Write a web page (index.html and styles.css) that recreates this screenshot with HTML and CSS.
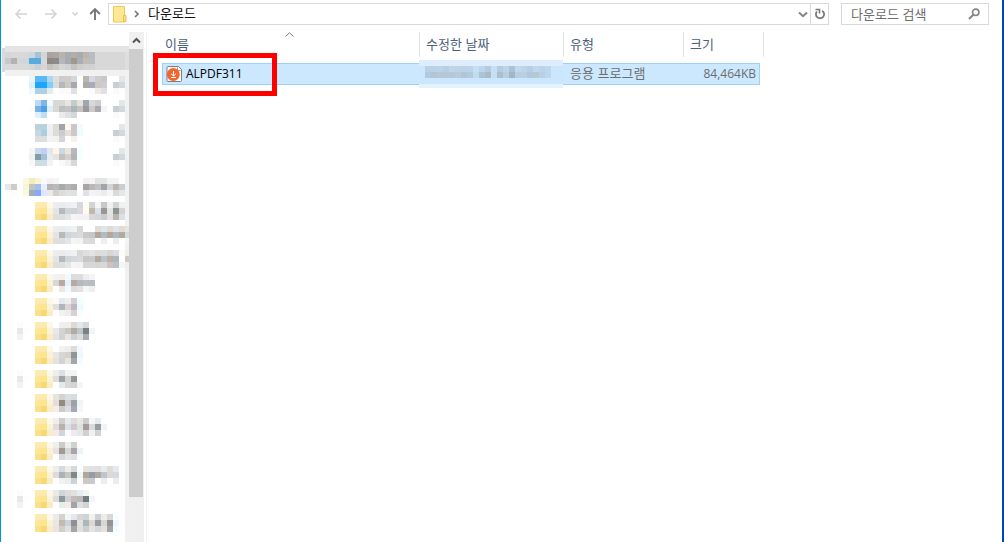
FILE: index.html
```html
<!DOCTYPE html>
<html lang="ko">
<head>
<meta charset="utf-8">
<title>다운로드</title>
<link rel="stylesheet" href="styles.css">
</head>
<body>
<div class="window">
  <header class="toolbar">
    <div class="history">
      <button class="icon-button" type="button" aria-label="뒤로" disabled>
        <svg width="14" height="12" viewBox="0 0 14 12"><path d="M13 6H2M6.500 1.500L2 6l4.500 4.500" fill="none" stroke="#d4d4d4" stroke-width="1.600"/></svg>
      </button>
      <button class="icon-button" type="button" aria-label="앞으로" disabled>
        <svg width="14" height="12" viewBox="0 0 14 12"><path d="M1 6h11M7.500 1.500L12 6l-4.500 4.500" fill="none" stroke="#d4d4d4" stroke-width="1.600"/></svg>
      </button>
      <button class="icon-button recent" type="button" aria-label="최근 위치" disabled>
        <svg width="8" height="6" viewBox="0 0 8 6"><path d="M1.500 1.500L4 4l2.500-2.500" fill="none" stroke="#cfcfcf" stroke-width="1.500"/></svg>
      </button>
      <button class="icon-button up" type="button" aria-label="위로">
        <svg width="12" height="14" viewBox="0 0 12 14"><path d="M6 13V2.500M1.200 7L6 2.200 10.800 7" fill="none" stroke="#777" stroke-width="1.900"/></svg>
      </button>
    </div>
    <div class="address">
      <svg class="folder" width="14" height="17" viewBox="0 0 14 17"><path d="M.5.5h11v15.500H.5z" fill="#ffe793" stroke="#ecc85a"/><path d="M10.500 9.500h2.500v6h-2.500z" fill="#fbe08a" stroke="#e6c04c"/></svg>
      <svg width="5" height="8" viewBox="0 0 5 8"><path d="M1 1l3 3-3 3" fill="none" stroke="#777" stroke-width="1.700"/></svg>
      <a class="crumb" href="#">다운로드</a>
      <button class="icon-button history-drop" type="button" aria-label="이전 위치">
        <svg width="10" height="7" viewBox="0 0 10 7"><path d="M1 1.500l4 3.700 4-3.700" fill="none" stroke="#858585" stroke-width="2"/></svg>
      </button>
      <button class="icon-button refresh" type="button" aria-label="새로 고침">
        <svg width="12" height="12" viewBox="0 0 12 12"><path d="M8.200 2.700a4.100 4.100 0 1 1-5.300.8" fill="none" stroke="#777" stroke-width="1.800"/><path d="M1.500 1.500h4v4" fill="none" stroke="#777" stroke-width="1.600"/></svg>
      </button>
    </div>
    <label class="search">
      <input type="text" placeholder="다운로드 검색" aria-label="다운로드 검색">
      <svg width="12" height="12" viewBox="0 0 12 12"><circle cx="7.700" cy="4.300" r="3.200" fill="none" stroke="#858585" stroke-width="1.600"/><path d="M5.300 6.700L1 11" stroke="#858585" stroke-width="2"/></svg>
    </label>
  </header>

  <div class="content">
    <nav class="tree" id="tree" aria-label="탐색 창"></nav>
    <div class="scrollbar">
      <button class="icon-button scroll-up" type="button" aria-label="위로 스크롤">
        <svg width="9" height="7" viewBox="0 0 9 7"><path d="M1 5.500l3.500-3.500L8 5.500" fill="none" stroke="#555" stroke-width="2"/></svg>
      </button>
      <div class="thumb"></div>
      <div class="track"></div>
    </div>
    <main class="files">
      <table class="list">
        <colgroup><col class="c-name"><col class="c-date"><col class="c-type"><col class="c-size"><col class="c-end"></colgroup>
        <thead>
          <tr>
            <th><button class="sort name-sort" type="button">이름<svg class="sort-mark" width="9" height="5" viewBox="0 0 9 5"><path d="M.5 4.500l4-3.700 4 3.700" fill="none" stroke="#777"/></svg></button></th>
            <th><button class="sort" type="button">수정한 날짜</button></th>
            <th><button class="sort" type="button">유형</button></th>
            <th colspan="2"><button class="sort" type="button">크기</button></th>
          </tr>
        </thead>
        <tbody>
          <tr>
            <td class="name">
              <div class="file">
                <svg width="16" height="16" viewBox="0 0 16 16"><path d="M2 .5h10.500l3 3v11q0 1-1 1H2q-1 0-1-1v-13q0-1 1-1z" fill="#fff" stroke="#857a78"/><path d="M11.500 1.500v3h3" fill="none" stroke="#b98a78"/><circle cx="7.300" cy="8.500" r="6.500" fill="#f2662b"/><path d="M7.500 5v5M5 7.700L7.500 10 10 7.700M5 11.500h5" fill="none" stroke="#fff"/></svg>
                <span>ALPDF311</span>
              </div>
              <div class="highlight"></div>
            </td>
            <td class="date"><svg class="date-mosaic" id="date" width="144" height="28" viewBox="0 0 144 28" role="img" aria-label="수정한 날짜"></svg></td>
            <td class="type">응용 프로그램</td>
            <td class="size">84,464KB</td>
            <td class="end"></td>
          </tr>
        </tbody>
      </table>
    </main>
  </div>
</div>
<script src="mosaic.js"></script>
</body>
</html>
```
FILE: styles.css
```css
* { box-sizing: border-box; }

body {
  margin: 0;
  background: #fff;
  font-family: "Noto Sans CJK KR", sans-serif;
  font-size: 13px;
  line-height: 18px;
}

button {
  margin: 0;
  padding: 0;
  border: 0;
  background: none;
  font: inherit;
  color: inherit;
}

svg { display: block; flex: none; }

.window {
  display: flex;
  flex-direction: column;
  min-height: 100vh;
  border-left: 1px solid #0096d6;
  border-right: 2px solid #0046ad;
}

.toolbar {
  display: flex;
  align-items: flex-start;
  height: 32px;
  padding: 3px 13px 0;
}

.history {
  display: flex;
  align-items: center;
  width: 94px;
  height: 22px;
  gap: 16px;
}

.icon-button {
  display: flex;
  align-items: center;
  justify-content: center;
  flex: none;
}

.recent { margin-left: -3px; }
.up { margin-left: -6px; }

.address {
  display: flex;
  flex: 1;
  align-items: center;
  height: 22px;
  padding-left: 4px;
  border: 1px solid #d9d9d9;
}

.folder { margin-right: 7px; }

.crumb {
  flex: 1;
  margin-left: 9px;
  padding-bottom: 2px;
  color: #111;
  text-decoration: none;
}

.history-drop { width: 14px; height: 20px; }

.refresh {
  width: 18px;
  height: 20px;
  border-left: 1px solid #d9d9d9;
}

.search {
  display: flex;
  align-items: center;
  width: 148px;
  height: 22px;
  margin-left: 12px;
  padding: 0 8px 0 9px;
  border: 1px solid #d9d9d9;
}

.search input {
  flex: 1;
  min-width: 0;
  height: 20px;
  padding: 0 0 2px;
  border: 0;
  outline: 0;
  background: none;
  font: inherit;
}

.search input::placeholder { color: #6d6d6d; opacity: 1; }

.content { display: flex; flex: 1; }

.tree {
  flex: none;
  width: 128px;
  padding-top: 14px;
  background: linear-gradient(#f1f1f1, #f1f1f1) right bottom / 4px calc(100% - 38px) no-repeat;
}

.node {
  display: block;
  height: 24px;
  padding-left: 4px;
}

.node.current {
  height: 30px;
  padding-left: 1px;
}

.node.group { margin-top: 6px; }

.scrollbar {
  display: flex;
  flex-direction: column;
  flex: none;
  width: 15px;
  background: #f0f0f0;
}

.scroll-up { height: 17px; }

.thumb {
  flex: 448;
  margin-right: 1px;
  background: #cdcdcd;
}

.track { flex: 45; }

.files {
  flex: 1;
  min-width: 0;
  margin-left: 2px;
  padding-left: 15px;
  border-left: 1px solid #f3f3f3;
}

.list {
  width: 602px;
  table-layout: fixed;
  border-collapse: separate;
  border-spacing: 0;
}

.c-name { width: 258px; }
.c-date { width: 144px; }
.c-type { width: 120px; }
.c-size { width: 76px; }
.c-end { width: 4px; }

.list th { padding: 0 0 6px; font-weight: 400; }

.sort {
  display: block;
  position: relative;
  width: 100%;
  height: 25px;
  padding: 0 6px 2px;
  border-right: 1px solid #e5e5e5;
  color: #4c607a;
  text-align: left;
}

.name-sort { padding-left: 3px; }

.sort-mark {
  position: absolute;
  top: 0;
  left: 123px;
}

.list td {
  position: relative;
  height: 22px;
  padding: 0 6px 2px;
  border: solid #99d1ff;
  border-width: 1px 0;
  background: #cce8ff;
  color: #6d6d6d;
  vertical-align: top;
}

.list .name { padding: 1px 0 0 3px; border-left-width: 1px; }

.file {
  display: flex;
  align-items: center;
  gap: 4px;
  color: #000;
}

.file, .list .size { font-family: "Open Sans", sans-serif; font-size: 12px; }

.list .size {
  padding: 1px 3px 0;
  border-right-width: 1px;
  text-align: right;
}

.list .end { padding: 0; border: 0; background: none; }

.highlight {
  position: absolute;
  top: -11px;
  left: -10px;
  width: 124px;
  height: 43px;
  border: 5px solid #f00;
}

.date-mosaic {
  position: absolute;
  top: -4px;
  left: -1px;
}
```
FILE: mosaic.js
```js
const NS = 'http://www.w3.org/2000/svg';
const CELL = 6;

function rect(svg, x, y, w, h, fill) {
  const r = document.createElementNS(NS, 'rect');
  const attrs = { x, y, width: w, height: h, fill };
  for (const key in attrs) r.setAttribute(key, attrs[key]);
  svg.append(r);
}

// Draws rows of space-separated hex colours; a dot leaves the cell empty.
function mosaic(svg, rows, x, y) {
  rows.forEach((row, j) => row.trim().split(/\s+/).forEach((c, i) => {
    if (c !== '.') rect(svg, x + i * CELL, y + j * CELL, CELL, CELL, '#' + c);
  }));
}

function node(kind, width, height) {
  const link = document.createElement('a');
  link.className = 'node ' + kind;
  link.href = '#';
  link.setAttribute('aria-label', '폴더');
  const svg = document.createElementNS(NS, 'svg');
  svg.setAttribute('width', width);
  svg.setAttribute('height', height);
  link.append(svg);
  document.getElementById('tree').append(link);
  return svg;
}

const current = node('current', 127, 30);
rect(current, 0, 2, 3, 24, '#d9d9d9');
rect(current, 3, 0, 124, 6, '#e4e4e4');
rect(current, 3, 6, 124, 18, '#d8d8d8');
rect(current, 3, 24, 124, 6, '#f1f1f1');
rect(current, 123, 6, 4, 18, '#dedede');
mosaic(current, [
  'd6d6d6 d9d9d9 d9d9d9 d6d9da cfd5d8 a6c3d6 d3d5d6 a8a4a2 aaa6a3 b8b3ad a6aeb4 b5ada6 a8abb0 bdb6ae b8bdc5',
  'c8c8c8 b3b3b3 d6d6d6 cfd7da 58abdc 58abdc d4d8da 8e8882 8d8b8a b5b8bb a5acb1 9f9891 aaafb6 c3bcb4 babdc2',
  'd9d9d9 d9d9d9 d9d9d9 d9d9d9 d2d7da c6d2d9 d5d6d7 c5c1bd ccc9c7 d5d5d5 d0d1d3 c5c2c0 cdcecf d4d1ce d2d2d4'
], 3, 6);

const pinned = [
  ['eaf4fa 5bb9f3 5ab8f3 acd8f7 e0deda ccc d0cdc8 d5d8da . b9b5b0 d8d8e4 d0ccc8 c8c8cc . . e4e7e8',
   'daf0fe 1ba5fc 1ba5fc 84cdf9 dddbd8 b5b8ba ccc8c4 a3abb0 . b0aaa4 a9abb8 ccc8c4 cdcdcd . c8cfd3 d3d8da',
   'f2f9fc b0d1e5 b2cfe2 dfedf5 . fafafa fef8f6 dfe0e1 . . fafafa ede9e6 e0dfe3 . fafafa fdfdfd'],
  ['. bbd9f2 7cb6e8 f4f9fd d9d9d4 d8d8d8 e9e4df c5ccca e6e3df a0a8ad d9d9db cdcdd2 . . . e4e7e8',
   'fcfcfc 78b3e4 4aa0e7 dfedf9 d9d8d5 bebfbe c4c4c4 adb6b9 c4c3c2 9a9a9d ccc9c8 aaaaae f4f5f6 . c8cfd3 d3d8da',
   '. e0effc bfdcf5 . . ebebeb e1e1e1 d4d7da . . . . . . fafafa fdfdfd'],
  ['. bed0da b9d0dd f0f0f0 e0dcd5 a0a5aa fff8ef cac6cc f0fcff . . . . . . e4e7e8',
   '. c8d6df aacde4 eee dedcd9 ccc e1e1e1 d2c8c3 eefaff . . . . . c8cfd3 d3d8da',
   '. ddd dedede f3f3f3 f2f2f2 d5d5d5 . f4f2f1 . . . . . . fafafa fdfdfd'],
  ['f5f5f5 c7d9f3 bdd1f3 e5e8eb fff5e8 cbd9df eae6db bbb5c3 f3ffff . . . . . . e4e7e8',
   'f0f0f0 809da8 a4c1d7 e8ebef e5e4e2 c2c2c1 d5d0cf b4b4b4 f5ffff . . . . . c8cfd3 d3d8da',
   'f8f8f8 d0dce2 cddde8 f3f3f3 . f9f9f9 f4f0f0 d8d8d8 . . . . . . fafafa fdfdfd']
];
pinned.forEach(rows => mosaic(node('', 124, 18), rows, 24, 0));

mosaic(node('group', 124, 18), [
  '. . . fcf8df f5ecbb fcf4d0 f5fbff f2f2f2 f5f5f5 . . . . f1f1f1 f4f4f4 e2e2e2 e4e4e4 eff4f6 f3f3f3',
  'e8e8e8 ccc . f9f5d5 bfc8b8 a6bdf0 e7eeff b8b3b5 babab9 a7a9aa b5b5b5 aaaeb1 . aaa3a7 b8b8b8 bfc3c5 a3a4aa d2d4d5 bdb6b0 c8ced3',
  '. fcfcfc . fcf8db a1b0b7 84a9ff dfe6ff ece9ea d3d0cf dcdcdc e1e1e1 e0e0e0 . e1e1e4 f4f4f4 f2f2f2 ededf0 f6f6f6 dbdad9 e3e6e7'
], 0, 0);

const folderCells = ['fbebb5 fbe9ae fdf8e6', 'fde69a ffe48a faf2d8', 'fbe08c f8d970 fbecc8'];
const folders = [
  ['ededed ebebeb ebeef4 f1f1f1 d6d8dc fffaf3 d3d3d3 f3f6f8 c8c8c8 f1f1f1 d3d3d3 eef1f4',
   'e4e4e4 b5babc d2d5d5 d0d3d6 d9d9d9 fffaf3 c2b8a9 d9e2ea 989890 e2e5e8 8e9492 d1d3d7',
   'dfdfdf dedede e2e6e8 f5f5f5 f3f3f3 f3f3f3 d8d8d8 d5d5d6 c9cbd0 e1e1e1 b9b3ad dbdee3'],
  ['ededed ebebeb ebeef4 f1f1f1 d6d8dc . . e1dcd8 e0e5e9 dedad5 e0e5e8 e0dbd5 e8e5e3',
   'e4e4e4 b5babc d2d5d5 d6d9db dbdbdb ccc9c6 c5c8ca b7a697 aebcc7 b6a897 abbac5 b7a998 cbdce7',
   'dfdfdf dedede e2e6e8 f5f5f5 f3f3f3 dcdcdc dadada . ecf0f2 . ededed . f5f5f5'],
  ['ededed ebebeb ebeef4 f1f1f1 d6d8dc dfdfdf e1e3e5 dedcd9 d9dee3 d8d5d0 d8dbe1 fffaf7 eee',
   'e4e4e4 b5babc d2d5d5 d6d9db dbdbdb c7c7c7 c6c9cd b8aa9b b7c3cf bdb1a5 aeb5c0 . d2c9bd',
   'dfdfdf dedede e2e6e8 f5f5f5 f3f3f3 d7d7d7 d7d7d7 d5d5d5 d7d7d8 cac3bf b9c0c8 f5f5f5 eeeeec'],
  ['f2f2f2 f5eeea f2faff dadcdf dfdcdb eceff2 f4f4f4',
   'd7d8d4 b9aa9c e2f2ff b7aaa1 b2bac3 bcbec0 b9bdc2',
   '. eee6e1 f2f9ff dbdde1 e4e2df f7f7f7 eeeeef'],
  ['fffaf7 e4ebef efeeed d2d0d5 f1ffff', 'e2dfda aeb6bb dbd6d5 c0b7bf edfbff', '. f0f1f2 f4ecec d3d3d3 f9fdff'],
  ['. eee ededeb ddd9d5 e4e7eb d6d8db', 'e8e8e8 d3d3d3 c9c7bf b3ab9f bec6cc 7a8184 f3f4f6', 'e3e3e3 d3d3d3 eae4df c9d0d7 dedcd9 a9acb4'],
  ['. f1f1f1 eeeeec dddad8 f3faff', 'e7e6e4 d6d6d6 d6d1cd 949494 edf8ff', 'e3e3e3 d3d3d3 e8e4df a0a7ad f6fbff'],
  ['ededea dae0e5 f3f3f3 f3f3f3', 'deddd8 9da3a8 d5d4d2 92979b', '. e5e9ec dbd8d4 d1d3d5 f5f5f5'],
  ['e6e4df d6d2cd dadfe3 d7dce0', 'e4ddd8 938b80 ccd0d4 9aa2aa eff4f7', 'f3eee9 cbcbc9 dadde2 a6a8b2 f5f6f7'],
  ['eeeeec cfcfcf e9e9e9 dcdce0 e8e7e2 cfcdcc f5f7f7 e5eaed', 'e3dbd8 bcb0ab dae1e6 d1c8cb dce4e3 a59d9b d9dadd 989da2 f2f3f6', 'f5eaeb d1d5d8 f8fcff f3e8ed e3e9e8 d2d0ce f1f1f1 d0d3d6'],
  ['eeeeeb cdcac8 eee d2d1d2', 'e5e2df a29997 d4d9d8 aaa4aa ebf4f6', '. d8d8d8 e4e5e5 dfe0e4 fbffff'],
  ['ededec d5dae1 ededec d6d9dc . e5e2df e0e3e6 dfdfdf e9e9ef dfdbd8 e6e8ef', 'dddad7 aab2b9 c9c7bd 808789 f2f5f6 afa79b 969ea4 afaaa0 c0c4d0 dbd8d5 d6d9e2', '. eff3f1 eceeed cdd2d5 . cec9c2 c7cbd0 . eeeef1 . ececf0'],
  ['e9e9e6 ced6d8 dfdbd8 e1e1de e5edef f3f3f1', 'dedcd8 8d999d ced1d2 c3bab9 bbb9b8 727a7c f3f5f8', '. e5ecea f4eae6 a1a5a8 dce0e3 d1d3d5'],
  ['ecebe8 d4d3d1 f5f5f5 e6e6ef d7d5d5 ced3d4 f1f1f0 ccd2d3 edeceb dad8d7 f6ffff', 'ebe6e1 c3b9ac c9d3df 938d96 dfe3dc acb7bd ddd9d2 989da1 d7d7d7 999291 edf7ff', 'e8e4e0 d1cfcc e3e1df a3a5a7 dce1e0 c9ced2 e5e2df d4d8db e6dfdc a2a4aa f1fdff']
];
const expandable = [5, 7, 12];
folders.forEach((rows, n) => {
  const svg = node('', 124, 18);
  if (expandable.includes(n)) mosaic(svg, ['fcfcfc', 'e8e8e8 fdfdfd', 'f3f3f3'], 12, 0);
  mosaic(svg, rows.map((row, i) => folderCells[i] + ' ' + row), 30, 0);
});

const date = document.getElementById('date');
rect(date, 0, 0, 144, 6, '#ddedfd');
rect(date, 0, 6, 144, 18, '#cbe6fd');
rect(date, 0, 24, 144, 4, '#e3f2fe');
mosaic(date, [
  'b9d1e5 bbd2e6 bcd3e7 b8cfe3 bfd5e8 bdd4e8 bad1e6 bcd4e8 c5dff4 bcd5ea b5cade c5e0f5 b4cbe0 bcd4e8 acc2d4 bfd9ed bcd5e9 b7cfe4 bfd8ed bbd4ea bdd7ee',
  'b3c9dc b1c5d6 b6c8d8 b4c8d9 b4c8da b7cbdc afc6d8 b4cadb c1dbef acc2d5 a9bac8 c5e0f5 acbfd1 b8cee1 a3b6c5 b8cfe1 b8cee1 b0c7dc b6c9d2 b8d0e4 bcd6ec'
], 6, 6);
```
